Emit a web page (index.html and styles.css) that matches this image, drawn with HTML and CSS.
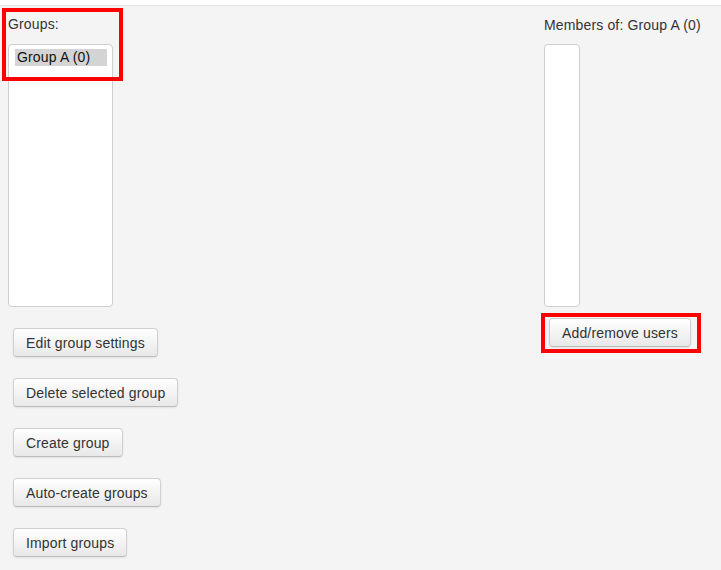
FILE: index.html
```html
<!DOCTYPE html>
<html>
<head>
<meta charset="utf-8">
<link rel="stylesheet" href="styles.css">
</head>
<body>
<div class="topbar"></div>
<div class="page">
  <div class="col-left">
    <div class="label">Groups:</div>
    <div class="listbox groups">
      <div class="option selected">Group A (0)</div>
    </div>
    <div class="actions">
      <button class="btn">Edit group settings</button>
      <button class="btn">Delete selected group</button>
      <button class="btn">Create group</button>
      <button class="btn">Auto-create groups</button>
      <button class="btn">Import groups</button>
    </div>
  </div>
  <div class="col-right">
    <div class="label label-right">Members of: Group A (0)</div>
    <div class="listbox members"></div>
    <div class="actions-right">
      <button class="btn">Add/remove users</button>
    </div>
  </div>
  <div class="mark mark-groups"></div>
  <div class="mark mark-add"></div>
</div>
</body>
</html>
```
FILE: styles.css
```css
html, body {
  margin: 0;
  padding: 0;
  background: #f4f4f4;
}
body {
  font-family: "Liberation Sans", Arial, Helvetica, sans-serif;
  font-size: 14px;
  line-height: 20px;
  letter-spacing: 0.15px;
  color: #333;
  width: 721px;
  height: 570px;
  overflow: hidden;
}
.topbar {
  height: 5px;
  background: #fff;
  border-bottom: 1px solid #e2e2e2;
}
.page {
  position: relative;
  display: grid;
  grid-template-columns: 536px 1fr;
  padding: 8px 0 0 8px;
}
.col-left, .col-right {
  display: flex;
  flex-direction: column;
  align-items: flex-start;
}
.label {
  height: 20px;
  margin-bottom: 10px;
}
.label-right {
  padding-top: 1px;
  height: 19px;
}
.listbox {
  box-sizing: border-box;
  height: 263px;
  background: #fff;
  border: 1px solid #cfcfcf;
  border-radius: 4px;
}
.groups {
  width: 105px;
  padding: 4px 5px 0 6px;
}
.members {
  width: 36px;
}
.option {
  height: 17px;
  line-height: 17px;
  padding-left: 2px;
  color: #111;
}
.option.selected {
  background: #d4d4d4;
}
.actions {
  display: flex;
  flex-direction: column;
  align-items: flex-start;
  gap: 21px;
  margin: 21px 0 0 5px;
}
.actions-right {
  margin: 11px 0 0 5px;
}
.btn {
  box-sizing: border-box;
  height: 29px;
  padding: 0 12px;
  font-family: inherit;
  font-size: 14px;
  line-height: 20px;
  letter-spacing: 0.15px;
  color: #333;
  background: linear-gradient(#ffffff, #e8e8e8);
  border: 1px solid #d0d0d0;
  border-bottom-color: #bcbcbc;
  border-radius: 4px;
  box-shadow: inset 0 1px 0 rgba(255,255,255,0.3), 0 1px 2px rgba(0,0,0,0.08);
}
.mark {
  position: absolute;
  box-sizing: border-box;
  border: 4px solid #ff0000;
}
.mark-groups {
  left: 2px;
  top: 2px;
  width: 121px;
  height: 73px;
}
.mark-add {
  left: 541px;
  top: 307px;
  width: 160px;
  height: 40px;
}
```
